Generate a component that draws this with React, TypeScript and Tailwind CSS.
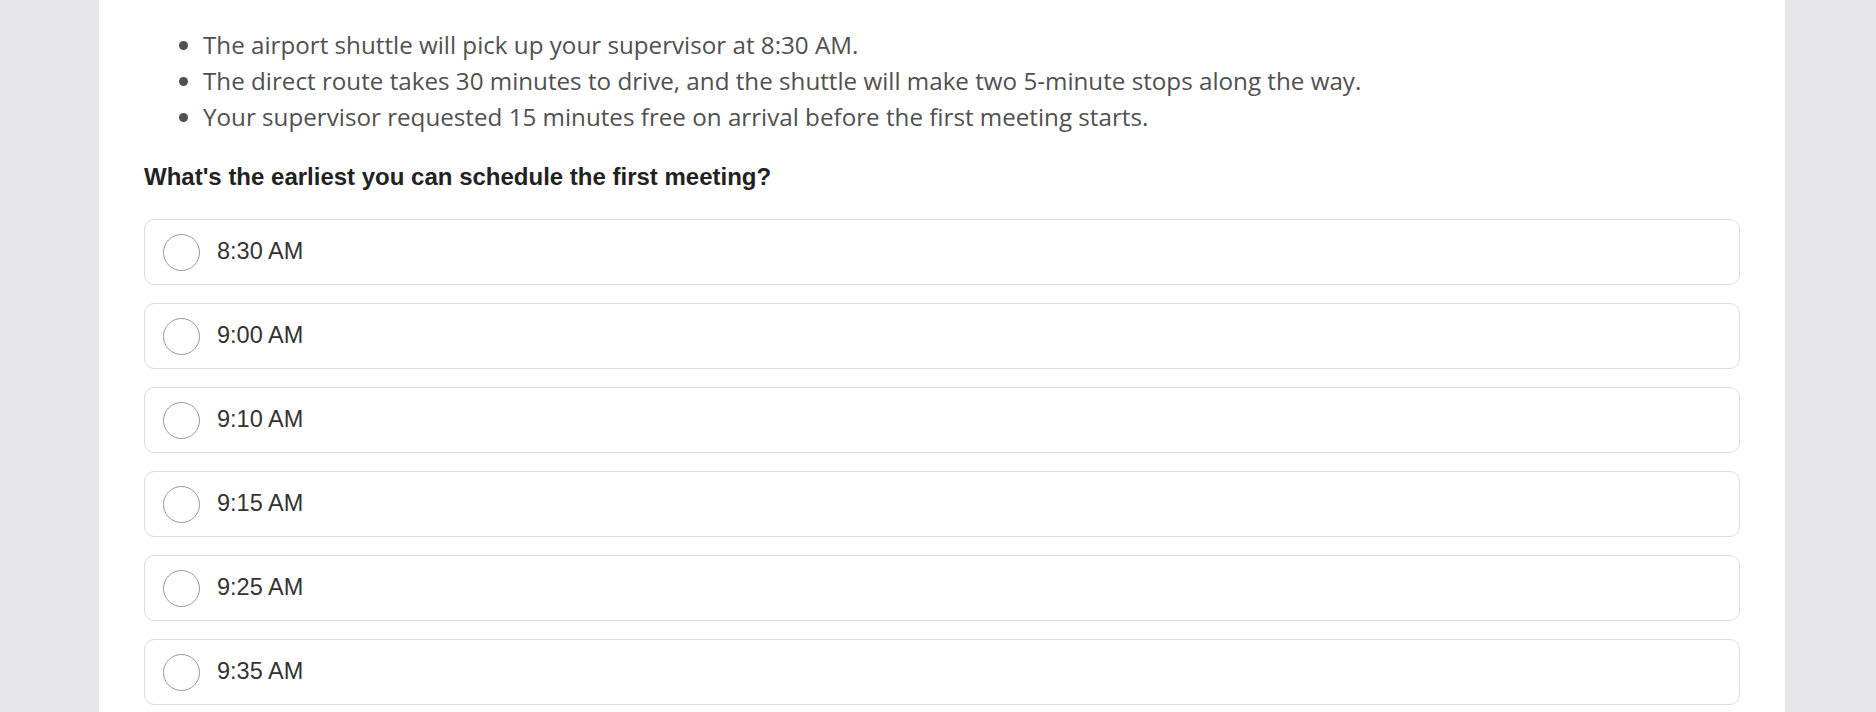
const facts = [
  "The airport shuttle will pick up your supervisor at 8:30 AM.",
  "The direct route takes 30 minutes to drive, and the shuttle will make two 5-minute stops along the way.",
  "Your supervisor requested 15 minutes free on arrival before the first meeting starts.",
];

const options = ["8:30 AM", "9:00 AM", "9:10 AM", "9:15 AM", "9:25 AM", "9:35 AM"];

const Option = ({ label }: { label: string }) => (
  <label className="flex items-center h-[66px] rounded-[10px] border border-[#dcdcdc] bg-white pl-[18px] cursor-pointer">
    <span className="w-[37px] h-[37px] rounded-full border border-[#9a9a9a] bg-white shrink-0" />
    <span className="ml-[17px] text-[23.5px] text-[#333] font-['Liberation_Sans',Arial,sans-serif]">
      {label}
    </span>
  </label>
);

export default function App() {
  return (
    <div className="min-h-screen bg-[#e6e5e7] pl-[99px] pr-[91px]">
      <div className="bg-white min-h-screen px-[45px] pt-[27px]">
        <ul className="list-disc pl-[59px] text-[24.2px] leading-[36px] text-[#505050] font-['Open_Sans',sans-serif]">
          {facts.map((f) => (
            <li key={f}>{f}</li>
          ))}
        </ul>

        <h2 className="mt-[24px] text-[24px] font-bold text-[#222] font-['Liberation_Sans',Arial,sans-serif]">
          What's the earliest you can schedule the first meeting?
        </h2>

        <div className="mt-[24px] flex flex-col gap-[18px]">
          {options.map((o) => (
            <Option key={o} label={o} />
          ))}
        </div>
      </div>
    </div>
  );
}
